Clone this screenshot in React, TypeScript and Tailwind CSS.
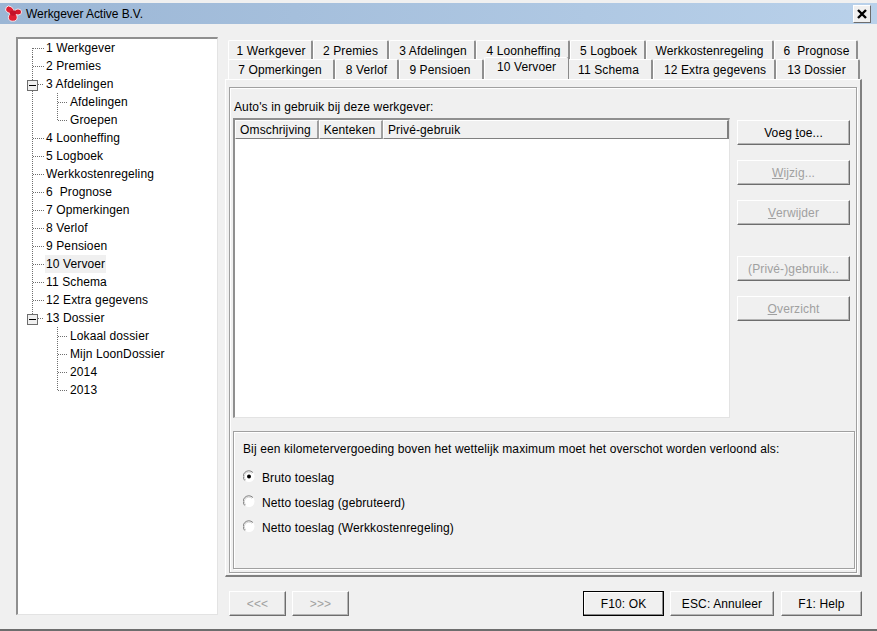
import React from 'react';

const font = { fontFamily: '"Liberation Sans", Arial, sans-serif', letterSpacing: '0.12px' };

const treeItems = [
  { label: '1 Werkgever', level: 1 },
  { label: '2 Premies', level: 1 },
  { label: '3 Afdelingen', level: 1, open: true },
  { label: 'Afdelingen', level: 2 },
  { label: 'Groepen', level: 2, last: true },
  { label: '4 Loonheffing', level: 1 },
  { label: '5 Logboek', level: 1 },
  { label: 'Werkkostenregeling', level: 1 },
  { label: '6  Prognose', level: 1 },
  { label: '7 Opmerkingen', level: 1 },
  { label: '8 Verlof', level: 1 },
  { label: '9 Pensioen', level: 1 },
  { label: '10 Vervoer', level: 1, selected: true },
  { label: '11 Schema', level: 1 },
  { label: '12 Extra gegevens', level: 1 },
  { label: '13 Dossier', level: 1, open: true, end: true },
  { label: 'Lokaal dossier', level: 2, tail: true },
  { label: 'Mijn LoonDossier', level: 2, tail: true },
  { label: '2014', level: 2, tail: true },
  { label: '2013', level: 2, tail: true, last: true },
];

const topTabs = [
  ['1 Werkgever', 'w-[85px] pl-[2px]'],
  ['2 Premies', 'w-[76px]'],
  ['3 Afdelingen', 'w-[87px] pl-[2px]'],
  ['4 Loonheffing', 'w-[94px] pl-[2px]'],
  ['5 Logboek', 'w-[76px] pl-[2px]'],
  ['Werkkostenregeling', 'w-[128px]'],
  ['6  Prognose', 'w-[84px] pl-[2px]'],
];

const bottomTabs = [
  ['7 Opmerkingen', 'w-[107px] pr-[2px]'],
  ['8 Verlof', 'w-[64px]'],
  ['9 Pensioen', 'w-[85px] pr-[2px]'],
  ['10 Vervoer', 'w-[84px]', true],
  ['11 Schema', 'w-[85px] pr-[3px]'],
  ['12 Extra gegevens', 'w-[123px] pl-[2px]'],
  ['13 Dossier', 'w-[84px] pr-[2px]'],
];

const dots = '#6f6f6f';

function TreeRow({ item }: { item: (typeof treeItems)[number] }) {
  const w = item.level === 1 ? 27 : 51;
  return (
    <div className="flex h-[18px] items-center">
      <svg width={w} height={18} className="shrink-0">
        {/* main trunk */}
        {!item.tail && !item.end && (
          <line x1="14.5" x2="14.5" y1={item.label === '1 Werkgever' ? 9 : 0} y2="18" stroke={dots} strokeDasharray="1 1" />
        )}
        {item.end && <line x1="14.5" x2="14.5" y1="0" y2="6" stroke={dots} strokeDasharray="1 1" />}
        {item.level === 1 && !item.open && (
          <line x1="15" x2="26" y1="9.5" y2="9.5" stroke={dots} strokeDasharray="1 1" />
        )}
        {item.level === 2 && (
          <>
            <line x1="39.5" x2="39.5" y1="0" y2={item.last ? 10 : 18} stroke={dots} strokeDasharray="1 1" />
            <line x1="40" x2="50" y1="9.5" y2="9.5" stroke={dots} strokeDasharray="1 1" />
          </>
        )}
        {item.open && (
          <>
            <line x1="20" x2="26" y1="9.5" y2="9.5" stroke={dots} strokeDasharray="1 1" />
            <rect x="9.5" y="5.5" width="10" height="10" fill="#f0f0f0" stroke="#6d6d6d" />
            <line x1="11" x2="18" y1="10.5" y2="10.5" stroke="#000" />
          </>
        )}
      </svg>
      <span className={`whitespace-pre px-px text-[12px] text-[#000] ${item.selected ? 'bg-[#f0f0f0]' : ''}`}>
        {item.label}
      </span>
    </div>
  );
}

function Tab({ label, width, active }: { label: string; width: string; active?: boolean }) {
  return (
    <div
      className={`flex items-center justify-center whitespace-pre rounded-t-[2px] border-t border-l border-white bg-[#f0f0f0] text-[12px] text-[#000] ${width} ${
        active ? 'z-10 h-[22px] pb-[3px] shadow-[1px_0_0_#8a8a8a]' : 'h-[20px] border-r-2 border-r-[#8f8f8f]'
      }`}
    >
      {label}
    </div>
  );
}

function Btn({
  children,
  width = 'w-[113px]',
  disabled,
  isDefault,
}: {
  children: React.ReactNode;
  width?: string;
  disabled?: boolean;
  isDefault?: boolean;
}) {
  return (
    <div
      className={`flex h-[25px] items-center justify-center whitespace-pre border text-[12px] ${width} ${
        isDefault
          ? 'border-black shadow-[inset_-1px_-1px_0_#8a8a8a,inset_1px_1px_0_#ffffff]'
          : 'border-t-white border-l-white border-r-[#6d6d6d] border-b-[#6d6d6d] shadow-[inset_-1px_-1px_0_#b5b5b5]'
      } ${disabled ? 'text-[#a0a0a0]' : 'text-[#000]'}`}
    >
      {children}
    </div>
  );
}

function Radio({ label, checked }: { label: string; checked?: boolean }) {
  return (
    <div className="flex h-[25px] items-center">
      <svg width="12" height="13" className="mr-[7px] -mt-[2px] shrink-0">
        <circle cx="6" cy="6.5" r="5.5" fill="#fff" />
        <path d="M1.8 10.5 A5.5 5.5 0 0 1 9.9 2.5" fill="none" stroke="#7a7a7a" />
        <path d="M2.8 9.9 A4.5 4.5 0 0 1 9 3.3" fill="none" stroke="#d0d0d0" />
        {checked && <circle cx="6" cy="6.5" r="2" fill="#000" />}
      </svg>
      <span className="text-[12px] text-[#000]">{label}</span>
    </div>
  );
}

export default function App() {
  return (
    <div style={font} className="flex h-[631px] w-[877px] flex-col overflow-hidden border-b-2 border-b-[#6d6d6d] bg-[#f0f0f0] pt-[3px]">
      {/* Title bar */}
      <div className="flex h-[21px] shrink-0 items-center bg-gradient-to-r from-[#9bb6d5] to-[#b9d1ea] pl-[5px] pr-[6px]">
        <svg width="17" height="17" viewBox="0 0 17 17" className="shrink-0">
          <g stroke="#ffffff" strokeWidth="0.8">
            <ellipse cx="4.6" cy="4.8" rx="4.2" ry="3.4" fill="#e01f33" transform="rotate(35 4.6 4.8)" />
            <ellipse cx="13" cy="7" rx="3.6" ry="3" fill="#d5182c" />
            <ellipse cx="7.8" cy="12.4" rx="4.4" ry="3.8" fill="#e01f33" />
          </g>
          <ellipse cx="8" cy="8" rx="3.2" ry="2.8" fill="#c4122a" />
        </svg>
        <span className="ml-[4px] text-[12px] tracking-[-0.05px] text-[#000]">Werkgever Active B.V.</span>
        <div className="ml-auto flex h-[18px] w-[18px] items-center justify-center border border-t-white border-l-white border-r-[#6d6d6d] border-b-[#6d6d6d] bg-[#f0f0f0]">
          <svg width="12" height="12" viewBox="0 0 12 12">
            <path d="M2 2 L10 10 M10 2 L2 10" stroke="#000" strokeWidth="2.4" />
          </svg>
        </div>
      </div>

      <div className="flex flex-1 pl-[16px] pt-[13px]">
        {/* Tree */}
        <div className="h-[578px] w-[202px] shrink-0 border-t-2 border-l-2 border-r border-b border-t-[#8f8f8f] border-l-[#8f8f8f] border-r-[#e3e3e3] border-b-[#e3e3e3] bg-white">
          {treeItems.map((item) => (
            <TreeRow key={item.label + item.level} item={item} />
          ))}
        </div>

        <div className="ml-[7px] flex w-[637px] flex-col pt-[3px]">
          {/* Tabs */}
          <div className="flex h-[20px] pl-[3px]">
            {topTabs.map(([label, width]) => (
              <Tab key={label} label={label} width={width} />
            ))}
          </div>
          <div className="flex h-[19px] items-end pl-[3px]">
            {bottomTabs.map(([label, width, active]) => (
              <Tab key={label as string} label={label as string} width={width as string} active={!!active} />
            ))}
          </div>

          {/* Tab page */}
          <div className="h-[498px] border-t border-l border-r-2 border-b-2 border-t-white border-l-white border-r-[#808080] border-b-[#808080] px-[3px] pb-[3px] pt-[7px]">
            <div className="flex h-[486px] w-[628px] flex-col border border-[#a0a0a0] pl-[3px] shadow-[inset_1px_1px_0_#ffffff,1px_1px_0_#ffffff]">
              <div className="flex">
                <div className="w-[497px]">
                  <div className="flex h-[30px] items-center pl-px pt-[7px] text-[12px] text-[#000]">Auto's in gebruik bij deze werkgever:</div>
                  <div className="h-[300px] border-t-2 border-l-2 border-r border-b border-t-[#8f8f8f] border-l-[#8f8f8f] border-r-[#e3e3e3] border-b-[#e3e3e3] bg-white">
                    <div className="flex h-[19px] bg-[#f0f0f0] text-[12px] text-[#000]">
                      <div className="flex w-[84px] items-center justify-center border-t border-l border-r-2 border-b border-t-white border-l-white border-r-[#a0a0a0] border-b-[#808080] pr-[2px]">Omschrijving</div>
                      <div className="flex w-[64px] items-center justify-center border-t border-l border-r-2 border-b border-t-white border-l-white border-r-[#a0a0a0] border-b-[#808080] pr-[2px]">Kenteken</div>
                      <div className="flex flex-1 items-center border-t border-l border-r-2 border-b border-t-white border-l-white border-r-[#808080] border-b-[#808080] pl-[4px]">Privé-gebruik</div>
                    </div>
                  </div>
                </div>
                <div className="ml-[7px] flex flex-col pt-[32px]">
                  <Btn>Voeg <u>t</u>oe...</Btn>
                  <div className="mt-[15px]"><Btn disabled><u>W</u>ijzig...</Btn></div>
                  <div className="mt-[15px]"><Btn disabled><u>V</u>erwijder</Btn></div>
                  <div className="mt-[31px]"><Btn disabled>(Privé-)<u>g</u>ebruik...</Btn></div>
                  <div className="mt-[15px]"><Btn disabled><u>O</u>verzicht</Btn></div>
                </div>
              </div>

              {/* Overschot group */}
              <div className="mt-[13px] h-[138px] w-[622px] border border-[#a0a0a0] pl-[9px] shadow-[inset_1px_1px_0_#ffffff,1px_1px_0_#ffffff]">
                <div className="flex h-[33px] items-center text-[12px] text-[#000]">
                  Bij een kilometervergoeding boven het wettelijk maximum moet het overschot worden verloond als:
                </div>
                <div>
                  <Radio label="Bruto toeslag" checked />
                  <Radio label="Netto toeslag (gebruteerd)" />
                  <Radio label="Netto toeslag (Werkkostenregeling)" />
                </div>
              </div>
            </div>
          </div>

          {/* Footer buttons */}
          <div className="mt-[14px] flex pl-[4px]">
            <Btn width="w-[57px]" disabled>&lt;&lt;&lt;</Btn>
            <div className="ml-[6px]"><Btn width="w-[57px]" disabled>&gt;&gt;&gt;</Btn></div>
            <div className="ml-auto flex">
              <Btn width="w-[81px]" isDefault>F10: OK</Btn>
              <div className="ml-[6px]"><Btn width="w-[104px]">ESC: Annuleer</Btn></div>
              <div className="ml-[7px]"><Btn width="w-[81px]">F1: Help</Btn></div>
            </div>
          </div>
        </div>
      </div>
    </div>
  );
}
